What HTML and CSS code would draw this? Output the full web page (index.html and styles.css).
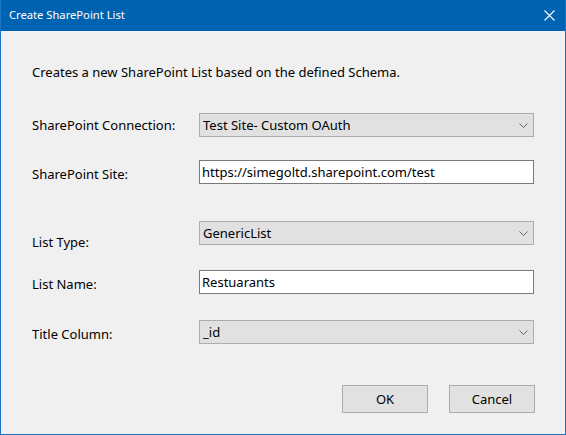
FILE: index.html
```html
<!DOCTYPE html>
<html>
<head>
<meta charset="utf-8">
<link rel="stylesheet" href="styles.css">
</head>
<body>
<div class="window">
  <div class="titlebar">
    <span class="title">Create SharePoint List</span>
    <svg class="close" width="11" height="11" viewBox="0 0 11 11"><path d="M0.5 0.5 L10.5 10.5 M10.5 0.5 L0.5 10.5" stroke="#fff" stroke-width="1.1" fill="none"/></svg>
  </div>
  <div class="content">
    <p class="desc">Creates a new SharePoint List based on the defined Schema.</p>
    <div class="row row-conn">
      <span class="label lbl-conn">SharePoint Connection:</span>
      <div class="combo"><span>Test Site- Custom OAuth</span><svg class="chev" width="9" height="5" viewBox="0 0 9 5"><polyline points="0.5,0.5 4.5,4.5 8.5,0.5" fill="none" stroke="#666" stroke-width="1"/></svg></div>
    </div>
    <div class="row row-site">
      <span class="label lbl-site">SharePoint Site:</span>
      <div class="textbox">https://simegoltd.sharepoint.com/test</div>
    </div>
    <div class="row row-type">
      <span class="label lbl-type">List Type:</span>
      <div class="combo"><span>GenericList</span><svg class="chev" width="9" height="5" viewBox="0 0 9 5"><polyline points="0.5,0.5 4.5,4.5 8.5,0.5" fill="none" stroke="#666" stroke-width="1"/></svg></div>
    </div>
    <div class="row row-name">
      <span class="label lbl-name">List Name:</span>
      <div class="textbox">Restuarants</div>
    </div>
    <div class="row row-title">
      <span class="label lbl-title">Title Column:</span>
      <div class="combo"><span>_id</span><svg class="chev" width="9" height="5" viewBox="0 0 9 5"><polyline points="0.5,0.5 4.5,4.5 8.5,0.5" fill="none" stroke="#666" stroke-width="1"/></svg></div>
    </div>
    <div class="buttons">
      <div class="btn">OK</div>
      <div class="btn">Cancel</div>
    </div>
  </div>
</div>
</body>
</html>
```

FILE: styles.css
```css
html, body {
  margin: 0;
  padding: 0;
  background: #f0f0f0;
}
body {
  font-family: "Noto Sans", "Liberation Sans", sans-serif;
  font-size: 13px;
  color: #000;
}
.window {
  width: 566px;
  height: 435px;
  box-sizing: border-box;
  border: 1px solid #1a74c6;
  border-top: none;
  background: #f0f0f0;
  display: flex;
  flex-direction: column;
}
.titlebar {
  height: 31px;
  background: #0063b1;
  color: #fff;
  display: flex;
  align-items: center;
  justify-content: space-between;
  padding: 0 10px 1px 8px;
  box-sizing: border-box;
}
.title {
  font-size: 11.2px;
  line-height: 16px;
}
.close {
  display: block;
}
.content {
  padding: 32px 30px 0 31px;
}
.desc {
  margin: 0;
  line-height: 18px;
  height: 18px;
}
.row {
  display: flex;
  align-items: flex-start;
  height: 24px;
}
.row-conn { margin-top: 32px; }
.row-site { margin-top: 23px; }
.row-type { margin-top: 37px; }
.row-name { margin-top: 25px; }
.row-title { margin-top: 26px; }
.label {
  width: 167px;
  flex: none;
  line-height: 18px;
}
.lbl-conn { padding-top: 3px; }
.lbl-site { padding-top: 5px; }
.lbl-type { padding-top: 12px; }
.lbl-name { padding-top: 5px; }
.lbl-title { padding-top: 5px; }
.combo {
  width: 335px;
  height: 24px;
  box-sizing: border-box;
  background: #e1e1e1;
  border: 1px solid #adadad;
  display: flex;
  align-items: center;
  justify-content: space-between;
  padding: 0 5px 0 3px;
  line-height: 18px;
}
.chev {
  display: block;
}
.textbox {
  width: 335px;
  height: 24px;
  box-sizing: border-box;
  background: #fff;
  border: 1px solid #7a7a7a;
  padding: 2px 2px;
  line-height: 18px;
}
.buttons {
  display: flex;
  justify-content: flex-end;
  gap: 21px;
  margin-top: 41px;
}
.btn {
  width: 86px;
  height: 28px;
  box-sizing: border-box;
  background: #e1e1e1;
  border: 1px solid #adadad;
  display: flex;
  align-items: center;
  justify-content: center;
  line-height: 18px;
}
```
